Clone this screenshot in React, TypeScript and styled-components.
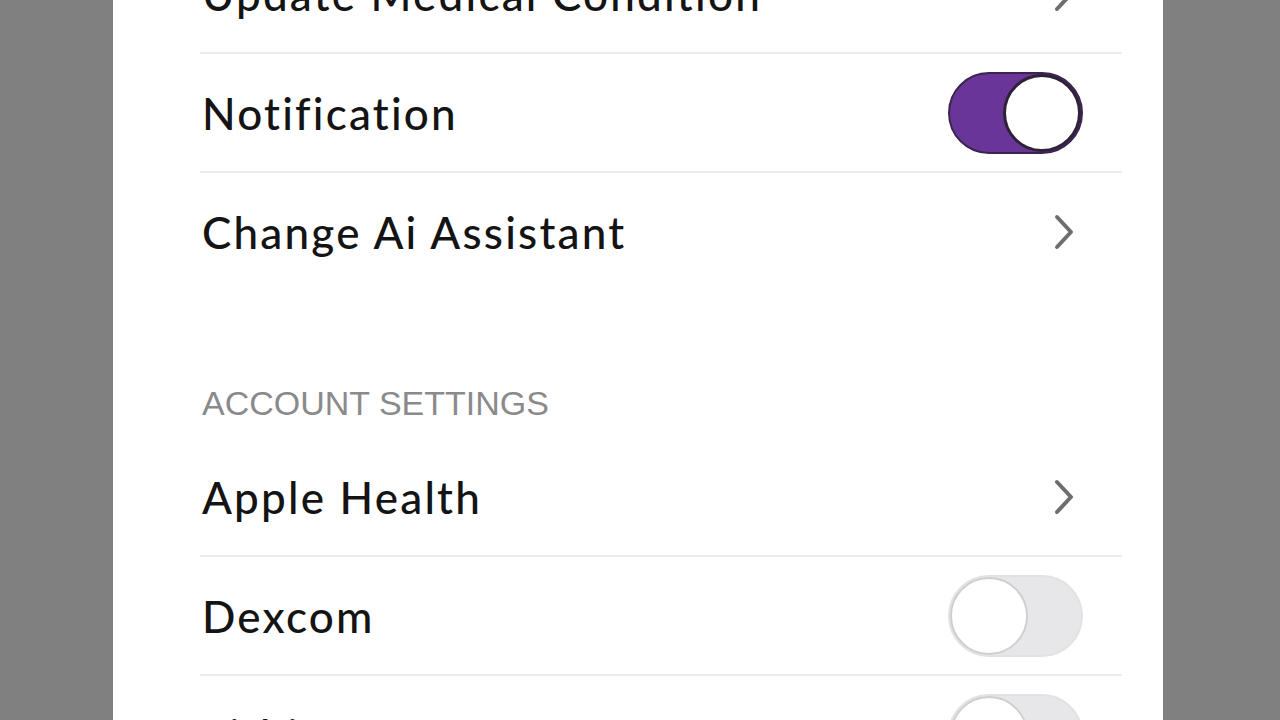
import styled, { createGlobalStyle } from "styled-components";

const GlobalStyle = createGlobalStyle`
  html, body {
    margin: 0;
    padding: 0;
    background: #808080;
    overflow: hidden;
  }
`;

type Item =
  | { label: string; kind: "link" }
  | { label: string; kind: "toggle"; on: boolean };

const general: Item[] = [
  { label: "Update Medical Condition", kind: "link" },
  { label: "Notification", kind: "toggle", on: true },
  { label: "Change Ai Assistant", kind: "link" },
];

const account: Item[] = [
  { label: "Apple Health", kind: "link" },
  { label: "Dexcom", kind: "toggle", on: false },
  { label: "Fitbit", kind: "toggle", on: false },
];

const Chevron = () => (
  <svg width="26" height="38" viewBox="0 0 26 38" fill="none">
    <path
      d="M6 4 L20 19 L6 34"
      stroke="#6e6e6e"
      strokeWidth="4"
      strokeLinecap="round"
      strokeLinejoin="round"
    />
  </svg>
);

const App = () => {
  const renderRow = (item: Item, last: boolean) => (
    <Row key={item.label} $last={last}>
      <Label>{item.label}</Label>
      {item.kind === "link" ? (
        <ChevronBox>
          <Chevron />
        </ChevronBox>
      ) : (
        <Switch $on={item.on}>
          <Knob $on={item.on} />
        </Switch>
      )}
    </Row>
  );

  return (
    <>
      <GlobalStyle />
      <Page>
        <Panel>
          <List>
            {general.map((item, i) => renderRow(item, i === general.length - 1))}
          </List>
          <SectionHeader>ACCOUNT SETTINGS</SectionHeader>
          <List>
            {account.map((item) => renderRow(item, false))}
          </List>
        </Panel>
      </Page>
    </>
  );
};

const Page = styled.div`
  width: 1280px;
  height: 720px;
  overflow: hidden;
  display: flex;
  justify-content: center;
`;

const Panel = styled.div`
  width: 1050px;
  margin-left: -4px;
  background: #ffffff;
  padding: 0 41px 0 87px;
  box-sizing: border-box;
  margin-top: -65px;
  height: 900px;
`;

const List = styled.div`
  display: flex;
  flex-direction: column;
`;

const Row = styled.div<{ $last: boolean }>`
  height: 119px;
  box-sizing: border-box;
  display: flex;
  align-items: center;
  justify-content: space-between;
  padding: 0 39px 0 2px;
  border-bottom: 2px solid ${(p) => (p.$last ? "transparent" : "#ececec")};
`;

const Label = styled.span`
  font-family: Lato, "Noto Sans", sans-serif;
  font-size: 44px;
  font-weight: 500;
  color: #141414;
  letter-spacing: 2.2px;
`;

const ChevronBox = styled.div`
  width: 40px;
  display: flex;
  justify-content: flex-end;
  margin-right: 6px;
`;

const Switch = styled.div<{ $on: boolean }>`
  width: 135px;
  height: 82px;
  border-radius: 41px;
  box-sizing: border-box;
  display: flex;
  align-items: center;
  justify-content: ${(p) => (p.$on ? "flex-end" : "flex-start")};
  background: ${(p) => (p.$on ? "#6a3599" : "#e7e7e9")};
  border: 2px solid ${(p) => (p.$on ? "#3c2450" : "#e2e2e4")};
`;

const Knob = styled.div<{ $on: boolean }>`
  width: 78px;
  height: 78px;
  border-radius: 50%;
  background: #ffffff;
  box-sizing: border-box;
  border: ${(p) => (p.$on ? "3px solid #2e2238" : "2px solid #cfcfcf")};
`;

const SectionHeader = styled.div`
  font-family: "Liberation Sans", Arial, sans-serif;
  font-size: 34px;
  color: #8a8a8a;
  padding: 92px 0 0 2px;
  height: 146px;
  box-sizing: border-box;
`;

export default App;
